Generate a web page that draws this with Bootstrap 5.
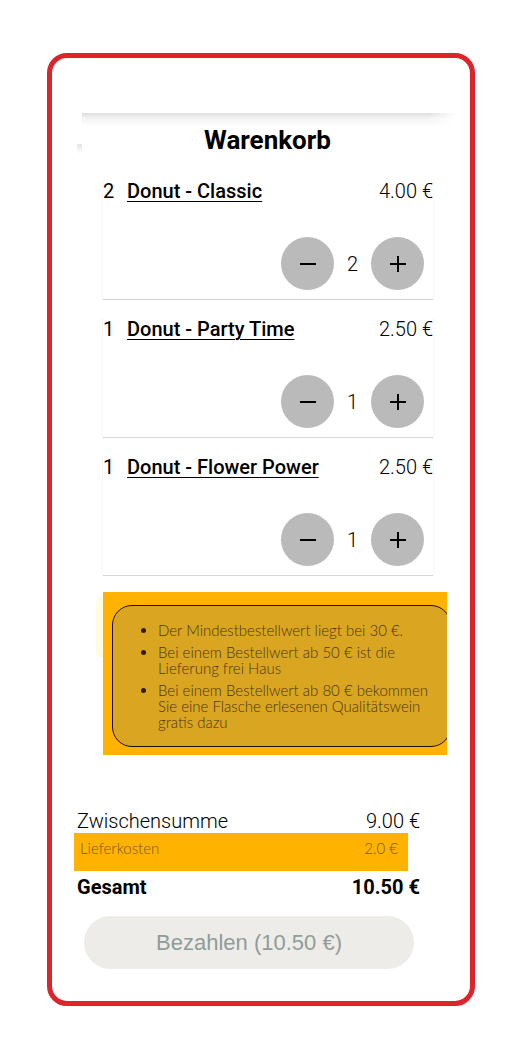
<!DOCTYPE html>
<html lang="de">
<head>
<meta charset="utf-8">
<meta name="viewport" content="width=device-width, initial-scale=1">
<title>Warenkorb</title>
<link href="https://cdn.jsdelivr.net/npm/bootstrap@5.3.0/dist/css/bootstrap.min.css" rel="stylesheet">
<style>
body { font-family: Roboto, "Liberation Sans", sans-serif; color: #000; background: #fff; font-size: 20px; line-height: 24px; font-weight: 300; }
.page { padding: 53px 50px 54px 47px; }
.basket { border: 5px solid #dc242c; border-radius: 20px; padding: 55px 15px 32px 22px; }
.top-edge { height: 14px; margin-left: 8px; background: linear-gradient(#dedede, #f4f4f4 40%, #fff); -webkit-mask-image: linear-gradient(90deg, #000 93%, transparent); mask-image: linear-gradient(90deg, #000 93%, transparent); }
.side-edge { position: absolute; left: 25px; top: 86px; width: 5px; height: 10px; background: linear-gradient(#e4e4e4, #fff); }
.title { font-size: 26px; line-height: 26px; font-weight: 700; margin: 0 0 26px 6px; }
.items { margin: 0 22px 0 29px; gap: 17px; }
.item { height: 121px; border-bottom: 1px solid #d6d6d6; box-shadow: 1px 0 #f7f7f7, -1px 0 #f7f7f7; padding-bottom: 9px; }
.item-name { color: #000; font-weight: 500; text-underline-offset: 3px; text-decoration-thickness: 1px; }
.qty { width: 24px; font-weight: 400; }
.stepper { padding-right: 9px; }
.step { width: 53px; height: 53px; border: 0; border-radius: 50%; background: #bababa; padding: 0; }
.step svg { display: block; margin: 0 auto; }
.count { width: 37px; text-align: center; }
.promo-wrap { position: relative; margin: 16px 8px 0 29px; }
.promo-wrap::before { content: ""; position: absolute; left: -7px; top: 4px; width: 7px; height: 62px; border-radius: 6px 0 0 6px; background: #fffbe2; }
.promo { background: #ffb300; padding: 13px 0 8px 9px; overflow: hidden; }
.promo-box { border: 1px solid #1c0d10; border-radius: 20px; background: #daa520; margin-right: -4px; padding: 16px 0 16px 45px; min-height: 142px; }
.thin { font-family: Lato, sans-serif; font-weight: 300; font-size: 15px; line-height: 16px; color: #4b3510; }
.promo-box ul { margin: 0; padding: 0; }
.promo-box li + li { margin-top: 6px; }
.promo-box li::marker { color: #2c1d08; }
.totals { margin-top: 54px; }
.sum-row { padding: 0 35px 0 3px; }
.shipping { margin-right: 47px; height: 38px; padding: 7px 10px 0 6px; background: #ffb300; color: #7a5608; }
.pay { display: block; width: calc(100% - 51px); margin: 17px 0 0 10px; height: 53px; border: 0; border-radius: 27px; background: #edece8; color: #909c99; font: 22px "Liberation Sans", Arial, sans-serif; }
</style>
</head>
<body>
<main class="page">
<section class="basket position-relative">
  <div class="top-edge"></div>
  <div class="side-edge"></div>
  <h1 class="title text-center">Warenkorb</h1>
  <div class="items d-flex flex-column">
    <article class="item d-flex flex-column justify-content-between">
      <div class="d-flex"><span class="qty">2</span><a class="item-name" href="#">Donut - Classic</a><span class="ms-auto">4.00 €</span></div>
      <div class="stepper d-flex justify-content-end align-items-center">
        <button class="step" type="button" aria-label="Weniger"><svg width="16" height="16"><path d="M0 8H16" stroke="#000" stroke-width="2"/></svg></button>
        <span class="count">2</span>
        <button class="step" type="button" aria-label="Mehr"><svg width="16" height="16"><path d="M0 8H16M8 0V16" stroke="#000" stroke-width="2"/></svg></button>
      </div>
    </article>
    <article class="item d-flex flex-column justify-content-between">
      <div class="d-flex"><span class="qty">1</span><a class="item-name" href="#">Donut - Party Time</a><span class="ms-auto">2.50 €</span></div>
      <div class="stepper d-flex justify-content-end align-items-center">
        <button class="step" type="button" aria-label="Weniger"><svg width="16" height="16"><path d="M0 8H16" stroke="#000" stroke-width="2"/></svg></button>
        <span class="count">1</span>
        <button class="step" type="button" aria-label="Mehr"><svg width="16" height="16"><path d="M0 8H16M8 0V16" stroke="#000" stroke-width="2"/></svg></button>
      </div>
    </article>
    <article class="item d-flex flex-column justify-content-between">
      <div class="d-flex"><span class="qty">1</span><a class="item-name" href="#">Donut - Flower Power</a><span class="ms-auto">2.50 €</span></div>
      <div class="stepper d-flex justify-content-end align-items-center">
        <button class="step" type="button" aria-label="Weniger"><svg width="16" height="16"><path d="M0 8H16" stroke="#000" stroke-width="2"/></svg></button>
        <span class="count">1</span>
        <button class="step" type="button" aria-label="Mehr"><svg width="16" height="16"><path d="M0 8H16M8 0V16" stroke="#000" stroke-width="2"/></svg></button>
      </div>
    </article>
  </div>
  <div class="promo-wrap">
    <div class="promo">
      <div class="promo-box thin">
        <ul>
          <li>Der Mindestbestellwert liegt bei 30 €.</li>
          <li>Bei einem Bestellwert ab 50 € ist die<br>Lieferung frei Haus</li>
          <li>Bei einem Bestellwert ab 80 € bekommen<br>Sie eine Flasche erlesenen Qualitätswein<br>gratis dazu</li>
        </ul>
      </div>
    </div>
  </div>
  <div class="totals">
    <div class="sum-row d-flex justify-content-between"><span>Zwischensumme</span><span>9.00 €</span></div>
    <div class="shipping thin d-flex justify-content-between"><span>Lieferkosten</span><span>2.0 €</span></div>
    <div class="sum-row d-flex justify-content-between fw-bold mt-1"><span>Gesamt</span><span>10.50 €</span></div>
  </div>
  <button class="pay" type="button">Bezahlen (10.50 €)</button>
</section>
</main>
<script src="https://cdn.jsdelivr.net/npm/bootstrap@5.3.0/dist/js/bootstrap.bundle.min.js"></script>
</body>
</html>
